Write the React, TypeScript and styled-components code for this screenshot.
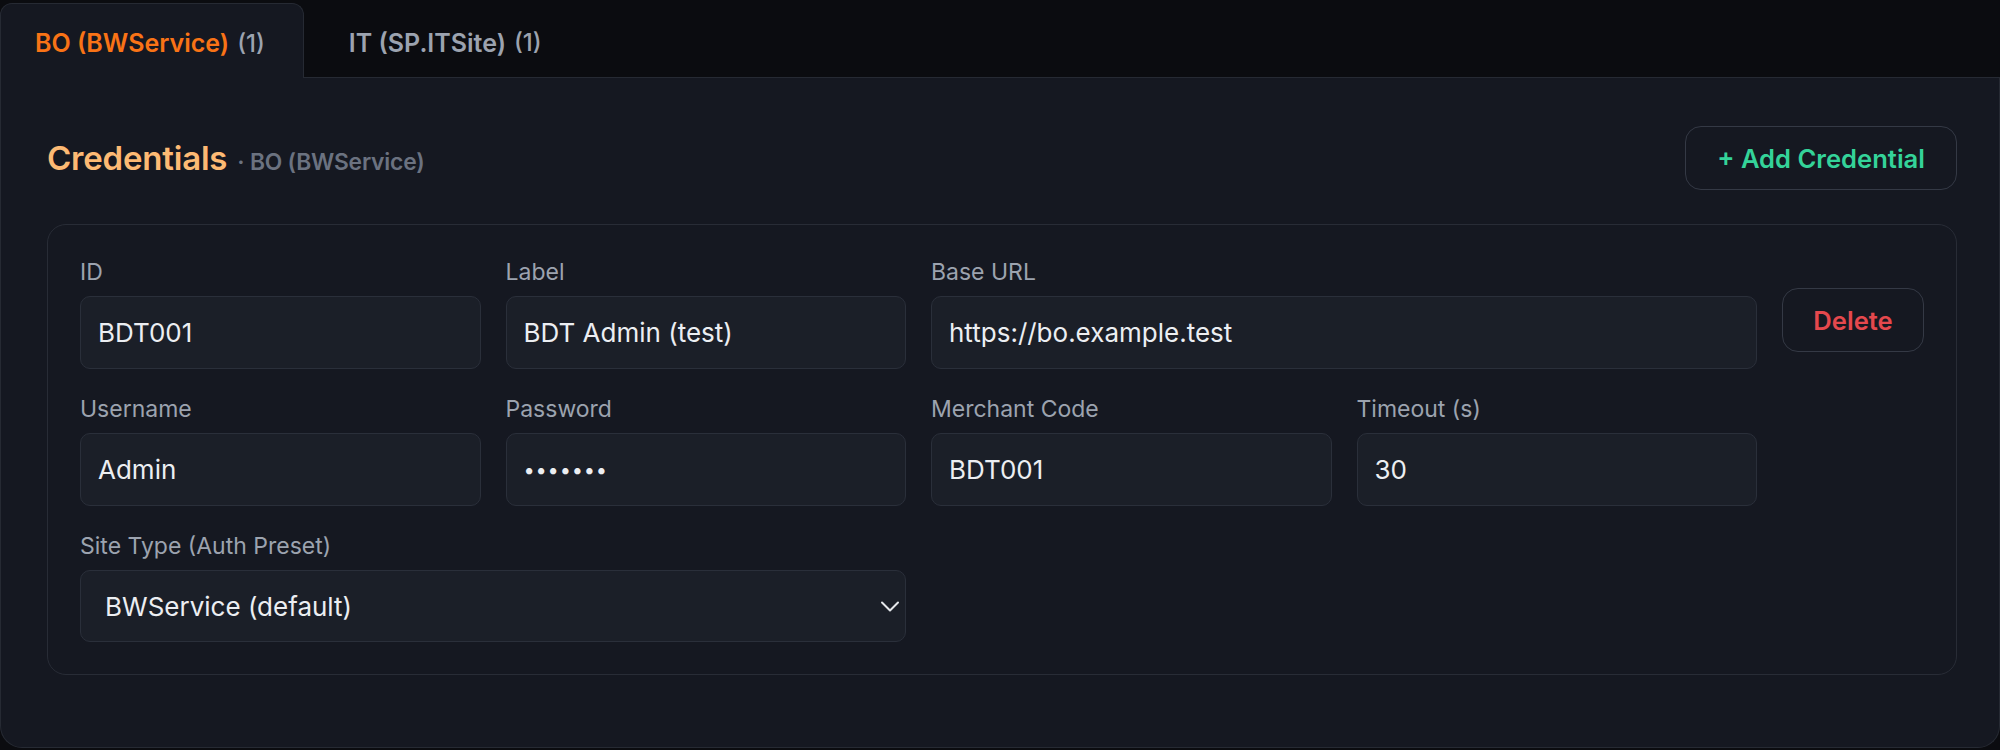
import React from 'react';
import styled, { createGlobalStyle } from 'styled-components';

const GlobalStyle = createGlobalStyle`
  html, body {
    margin: 0;
    padding: 0;
    background: #0b0c10;
  }
  body {
    font-family: Inter, 'Noto Sans', 'Liberation Sans', sans-serif;
    -webkit-font-smoothing: antialiased;
  }
  * {
    box-sizing: border-box;
  }
`;

const Page = styled.div`
  width: 2000px;
  display: flex;
  flex-direction: column;
`;

const TabBar = styled.div`
  display: flex;
  align-items: flex-end;
  height: 78px;
  border-bottom: 1px solid #262a33;
  gap: 10px;
`;

const Tab = styled.button<{ $active?: boolean }>`
  display: flex;
  align-items: center;
  gap: 8px;
  height: ${(p) => (p.$active ? '75px' : '74px')};
  margin-bottom: ${(p) => (p.$active ? '-1px' : '0')};
  padding: 4px 38px 0 34px;
  border: 1px solid ${(p) => (p.$active ? '#262a33' : 'transparent')};
  border-bottom: none;
  border-radius: 12px 12px 0 0;
  background: ${(p) => (p.$active ? '#151821' : 'transparent')};
  font-family: inherit;
  font-size: 25px;
  font-weight: 600;
  color: ${(p) => (p.$active ? '#f97316' : '#9ca3af')};
  cursor: pointer;
`;

const TabCount = styled.span`
  font-weight: 500;
  color: #9ca3af;
  font-size: 24px;
`;

const Panel = styled.section`
  background: #151821;
  border: 1px solid #262a33;
  border-top: none;
  border-radius: 0 0 22px 22px;
  padding: 48px 42px 72px 46px;
  height: 670px;
`;

const Header = styled.div`
  display: flex;
  align-items: center;
  justify-content: space-between;
`;

const Title = styled.h2`
  margin: 0;
  display: flex;
  align-items: baseline;
  gap: 10px;
  font-size: 33px;
  font-weight: 600;
  color: #fdba74;
  letter-spacing: -0.2px;
`;

const Subtitle = styled.span`
  font-size: 22.8px;
  font-weight: 600;
  color: #6b7280;
`;

const OutlineButton = styled.button<{ $tone: 'green' | 'red' }>`
  height: 64px;
  padding: 0 31px;
  border: 1.5px solid #343945;
  border-radius: 16px;
  background: transparent;
  font-family: inherit;
  font-size: 25.6px;
  font-weight: 600;
  color: ${(p) => (p.$tone === 'green' ? '#34d399' : '#e5484d')};
  cursor: pointer;
`;

const Card = styled.div`
  margin-top: 34px;
  border: 1px solid #282c36;
  border-radius: 19px;
  padding: 32px;
`;

const Grid = styled.div`
  display: grid;
  grid-template-columns: repeat(4, 1fr) 142px;
  column-gap: 25px;
  row-gap: 25px;
`;

const Field = styled.label<{ $span?: number }>`
  display: flex;
  flex-direction: column;
  gap: 8px;
  grid-column: span ${(p) => p.$span ?? 1};
`;

const FieldLabel = styled.span`
  font-size: 23px;
  line-height: 31px;
  color: #9ca3af;
`;

const Input = styled.input`
  height: 73px;
  width: 100%;
  padding: 0 17px;
  background: #1b1f28;
  border: 1.5px solid #2a2f3a;
  border-radius: 10px;
  font-family: inherit;
  font-size: 26px;
  color: #eceef2;
  outline: none;
`;

const PasswordInput = styled(Input)`
  font-size: 20px;
  letter-spacing: 0.8px;
`;

const SelectWrap = styled.div`
  position: relative;
`;

const Select = styled.select`
  appearance: none;
  -webkit-appearance: none;
  height: 72px;
  width: 100%;
  padding: 0 24px;
  background: #1b1f28;
  border: 1.5px solid #2a2f3a;
  border-radius: 10px;
  font-family: inherit;
  font-size: 26px;
  color: #eceef2;
  outline: none;
`;

const Chevron = styled.svg`
  position: absolute;
  right: 4px;
  top: 50%;
  transform: translateY(-50%);
  pointer-events: none;
`;

const ActionCell = styled.div`
  padding-top: 31px;
  display: flex;
  justify-content: flex-end;
`;

const DeleteButton = styled(OutlineButton)`
  width: 142px;
  padding: 0;
`;

export default function App() {
  return (
    <>
      <GlobalStyle />
      <Page>
        <TabBar>
          <Tab $active>
            BO (BWService) <TabCount>(1)</TabCount>
          </Tab>
          <Tab>
            IT (SP.ITSite) <TabCount>(1)</TabCount>
          </Tab>
        </TabBar>

        <Panel>
          <Header>
            <Title>
              Credentials
              <Subtitle>· BO (BWService)</Subtitle>
            </Title>
            <OutlineButton $tone="green">+ Add Credential</OutlineButton>
          </Header>

          <Card>
            <Grid>
              <Field>
                <FieldLabel>ID</FieldLabel>
                <Input defaultValue="BDT001" />
              </Field>
              <Field>
                <FieldLabel>Label</FieldLabel>
                <Input defaultValue="BDT Admin (test)" />
              </Field>
              <Field $span={2}>
                <FieldLabel>Base URL</FieldLabel>
                <Input defaultValue="https://bo.example.test" />
              </Field>
              <ActionCell>
                <DeleteButton $tone="red">Delete</DeleteButton>
              </ActionCell>

              <Field>
                <FieldLabel>Username</FieldLabel>
                <Input defaultValue="Admin" />
              </Field>
              <Field>
                <FieldLabel>Password</FieldLabel>
                <PasswordInput type="password" defaultValue="secret1" />
              </Field>
              <Field>
                <FieldLabel>Merchant Code</FieldLabel>
                <Input defaultValue="BDT001" />
              </Field>
              <Field>
                <FieldLabel>Timeout (s)</FieldLabel>
                <Input defaultValue="30" />
              </Field>
              <div />

              <Field $span={2}>
                <FieldLabel>Site Type (Auth Preset)</FieldLabel>
                <SelectWrap>
                  <Select defaultValue="bw">
                    <option value="bw">BWService (default)</option>
                    <option value="sp">SP.ITSite</option>
                  </Select>
                  <Chevron width="24" height="24" viewBox="0 0 24 24" fill="none">
                    <path d="M4 8.5l8 8 8-8" stroke="#e5e7eb" strokeWidth="2" strokeLinecap="round" strokeLinejoin="round" />
                  </Chevron>
                </SelectWrap>
              </Field>
            </Grid>
          </Card>
        </Panel>
      </Page>
    </>
  );
}
